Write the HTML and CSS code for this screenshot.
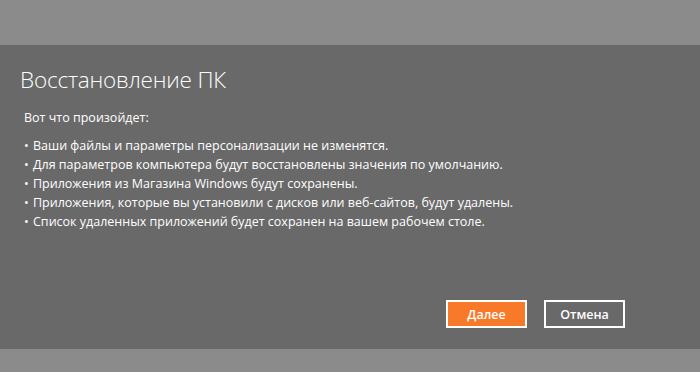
FILE: index.html
```html
<!DOCTYPE html>
<html lang="ru">
<head>
    <meta charset="UTF-8">
    <title>Восстановление ПК</title>
    <link rel="stylesheet" href="styles.css">
</head>
<body>
    <div class="backdrop-top"></div>

    <div class="dialog">
        <h1 class="dialog-title">Восстановление ПК</h1>
        <p class="dialog-intro">Вот что произойдет:</p>
        <ul class="dialog-list">
            <li>Ваши файлы и параметры персонализации не изменятся.</li>
            <li>Для параметров компьютера будут восстановлены значения по умолчанию.</li>
            <li>Приложения из Магазина Windows будут сохранены.</li>
            <li>Приложения, которые вы установили с дисков или веб-сайтов, будут удалены.</li>
            <li>Список удаленных приложений будет сохранен на вашем рабочем столе.</li>
        </ul>
        <div class="dialog-buttons">
            <button class="button button-primary">Далее</button>
            <button class="button">Отмена</button>
        </div>
    </div>

    <div class="backdrop-bottom"></div>
</body>
</html>
```

FILE: styles.css
```css
html, body {
    height: 100%;
}
body {
    margin: 0;
    background-color: #8b8b8b;
    font-family: "Open Sans", "Noto Sans", sans-serif;
    color: #fff;
    display: flex;
    flex-direction: column;
    overflow: hidden;
}
.backdrop-top {
    height: 45px;
    flex-shrink: 0;
}
.dialog {
    background-color: #696969;
    height: 304px;
    box-sizing: border-box;
    padding: 19px 75px 0 20px;
    display: flex;
    flex-direction: column;
    flex-shrink: 0;
}
.dialog-title {
    margin: 0;
    font-size: 22.5px;
    font-weight: 300;
    line-height: 31px;
    letter-spacing: -0.2px;
}
.dialog-intro {
    margin: 14px 0 0 4px;
    font-size: 12.5px;
    line-height: 18px;
}
.dialog-list {
    list-style: none;
    margin: 9px 0 0 4px;
    padding: 0;
    font-size: 12.5px;
    line-height: 19px;
}
.dialog-list li::before {
    content: "\2022";
    display: inline-block;
    width: 9px;
}
.dialog-buttons {
    margin-top: auto;
    margin-bottom: 21px;
    display: flex;
    justify-content: flex-end;
    gap: 17px;
}
.button {
    width: 81px;
    height: 28px;
    box-sizing: border-box;
    border: 2px solid #fff;
    background-color: #696969;
    color: #fff;
    font-family: "Open Sans", "Noto Sans", sans-serif;
    font-size: 12.5px;
    font-weight: 600;
    padding: 0;
    cursor: pointer;
}
.button-primary {
    background-color: #f8792a;
}
.backdrop-bottom {
    flex: 1;
}
```
